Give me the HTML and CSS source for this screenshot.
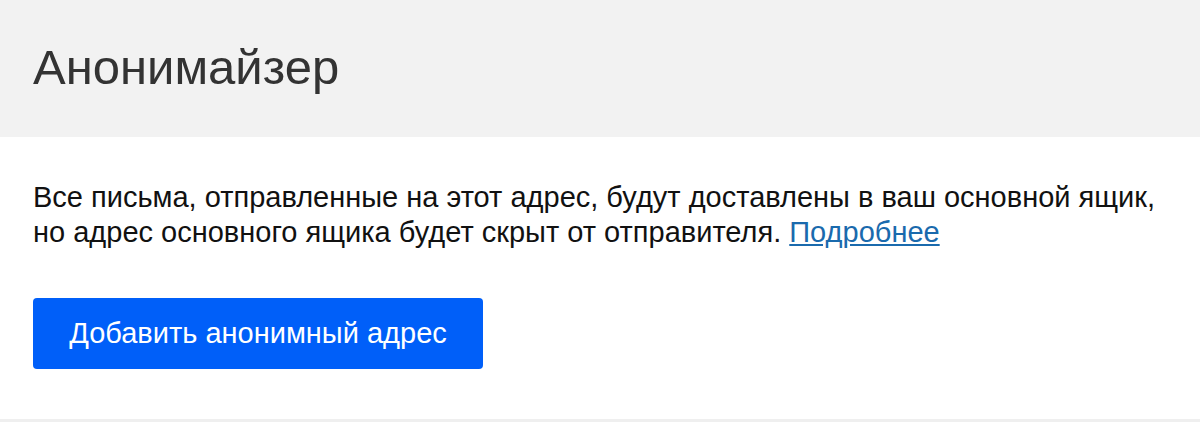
FILE: index.html
```html
<!DOCTYPE html>
<html lang="ru">
<head>
    <meta charset="UTF-8">
    <title>Анонимайзер</title>
    <link rel="stylesheet" href="styles.css">
</head>
<body>
    <header class="page-head">
        <h1>Анонимайзер</h1>
    </header>
    <main class="content">
        <p class="intro">Все письма, отправленные на этот адрес, будут доставлены в ваш основной ящик, но адрес основного ящика будет скрыт от отправителя. <a href="#">Подробнее</a></p>
        <button class="add-btn" type="button">Добавить анонимный адрес</button>
    </main>
    <div class="divider"></div>
</body>
</html>
```
FILE: styles.css
```css
* {
    margin: 0;
    padding: 0;
    box-sizing: border-box;
}

body {
    background-color: #ffffff;
    font-family: "Liberation Sans", Arial, Helvetica, sans-serif;
    color: #111111;
}

.page-head {
    height: 137px;
    padding: 38px 33px 0;
    background-color: #f2f2f2;
}

.page-head h1 {
    font-size: 49px;
    line-height: 58px;
    font-weight: 400;
    color: #333333;
}

.content {
    padding: 43px 33px 50px;
}

.intro {
    font-size: 29px;
    line-height: 35px;
    max-width: 1140px;
}

.intro a {
    color: #1a6aad;
}

.add-btn {
    margin-top: 48px;
    width: 450px;
    height: 71px;
    border: none;
    border-radius: 4px;
    background-color: #005ff9;
    color: #ffffff;
    font-family: inherit;
    font-size: 29px;
}

.divider {
    height: 3px;
    background-color: #efefef;
}
```
